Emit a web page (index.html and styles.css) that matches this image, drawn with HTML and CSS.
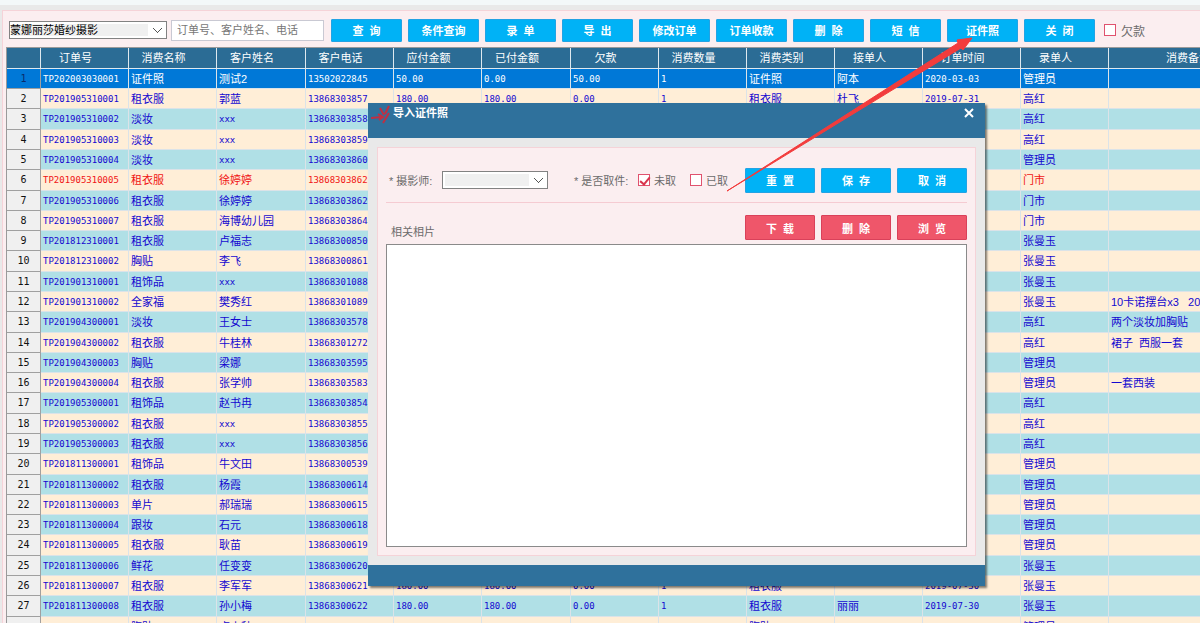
FILE: index.html
```
<!DOCTYPE html>
<html lang="zh-CN">
<head>
<meta charset="utf-8">
<title>导入证件照</title>
<link rel="stylesheet" href="styles.css">
</head>
<body>
<main class="panel">
  <form class="toolbar">
    <select class="combo shop" aria-label="门店"><option>蒙娜丽莎婚纱摄影</option></select>
    <input class="search" type="text" aria-label="搜索" placeholder="订单号、客户姓名、电话">
    <div class="actions">
      <button type="button" class="btn">查&nbsp; 询</button>
      <button type="button" class="btn">条件查询</button>
      <button type="button" class="btn">录&nbsp; 单</button>
      <button type="button" class="btn">导&nbsp; 出</button>
      <button type="button" class="btn">修改订单</button>
      <button type="button" class="btn">订单收款</button>
      <button type="button" class="btn">删&nbsp; 除</button>
      <button type="button" class="btn">短&nbsp; 信</button>
      <button type="button" class="btn">证件照</button>
      <button type="button" class="btn">关&nbsp; 闭</button>
    </div>
    <label class="check debt"><input type="checkbox">欠款</label>
  </form>
  <div class="grid-wrap">
    <table class="grid">
      <colgroup>
        <col class="c-no"><col class="c-std"><col class="c-std"><col class="c-wide"><col class="c-std"><col class="c-std"><col class="c-wide"><col class="c-std"><col class="c-std"><col class="c-std"><col class="c-std"><col class="c-date"><col class="c-std"><col class="c-note">
      </colgroup>
      <thead>
        <tr><th></th><th>订单号</th><th>消费名称</th><th>客户姓名</th><th>客户电话</th><th>应付金额</th><th>已付金额</th><th>欠款</th><th>消费数量</th><th>消费类别</th><th>接单人</th><th>订单时间</th><th>录单人</th><th>消费备注</th></tr>
      </thead>
      <tbody id="rows"></tbody>
    </table>
  </div>
</main>

<section class="dialog" role="dialog" aria-labelledby="dialog-title">
  <header class="dialog-head">
    <svg class="logo" viewBox="0 0 20 20" aria-hidden="true">
      <path d="M0 14 L11 13 M7 10 L12 13 L8 16 M9 4 L13 11 M18 2 L14 10 M18 9 L12 19" fill="none" stroke="#c02f42" stroke-width="2"/>
    </svg>
    <h1 id="dialog-title">导入证件照</h1>
    <button type="button" class="close" aria-label="关闭">
      <svg viewBox="0 0 12 12" aria-hidden="true"><path d="M2 2 L10 10 M10 2 L2 10" stroke="#fff" stroke-width="2"/></svg>
    </button>
  </header>
  <form class="dialog-body">
    <div class="form-row">
      <label class="field" for="photographer">* 摄影师:</label>
      <select class="combo photographer" id="photographer"><option></option></select>
      <fieldset class="pickup">
        <legend>* 是否取件:</legend>
        <label class="check"><input type="checkbox" checked>未取</label>
        <label class="check"><input type="checkbox">已取</label>
      </fieldset>
      <div class="buttons">
        <button type="button" class="btn">重&nbsp; 置</button>
        <button type="button" class="btn">保&nbsp; 存</button>
        <button type="button" class="btn">取&nbsp; 消</button>
      </div>
    </div>
    <div class="photo-row">
      <span class="caption">相关相片</span>
      <div class="buttons">
        <button type="button" class="btn red">下&nbsp; 载</button>
        <button type="button" class="btn red">删&nbsp; 除</button>
        <button type="button" class="btn red">浏&nbsp; 览</button>
      </div>
    </div>
    <div class="photos"></div>
  </form>
  <footer class="dialog-foot"></footer>
</section>

<svg class="arrow" viewBox="0 0 250 156" aria-hidden="true">
  <path d="M1 154 L232 6 L231 3 L246 1 L237 13 L235 11 Z" fill="#f23c3c" stroke="#f23c3c" stroke-width="1"/>
</svg>
<script src="app.js"></script>
</body>
</html>
```
FILE: styles.css
```
* { box-sizing: border-box; }
body {
  margin: 0;
  height: 100vh;
  overflow: hidden;
  padding: 10px 0 0 2px;
  background: linear-gradient(#f3f8f9 5px, #e9e9e9 5px);
  font-family: "Liberation Sans", "Noto Sans CJK SC", sans-serif;
  font-size: 11px;
  color: #6b6b6b;
}
button, input, select { font: inherit; }
.panel {
  height: 100%;
  display: flex;
  flex-direction: column;
  background: #fbeef0;
  border: 1px solid #f5d3d8;
  border-right: 0;
  border-bottom: 0;
  padding-left: 3px;
}
.toolbar {
  display: flex;
  align-items: center;
  height: 36px;
  padding: 2px 0 0 3px;
  flex: none;
}
.combo {
  appearance: none;
  height: 18px;
  padding: 0 18px 0 0;
  border: 1px solid #828282;
  border-radius: 0;
  line-height: 16px;
  color: #000;
  background:
    linear-gradient(#f0f0f0, #f0f0f0) 2px 2px / calc(100% - 20px) 12px no-repeat,
    linear-gradient(45deg, transparent 46%, #555 46%, #555 58%, transparent 58%) right 8px center / 5px 5px no-repeat,
    linear-gradient(-45deg, transparent 46%, #555 46%, #555 58%, transparent 58%) right 4px center / 5px 5px no-repeat,
    #fff;
}
.shop { width: 158px; }
.search {
  width: 153px;
  height: 21px;
  margin-left: 4px;
  padding: 0 5px;
  border: 1px solid #c9c9d3;
  background: #fff;
}
.search::placeholder { color: #777; }
.actions { display: flex; gap: 6px; margin-left: 7px; }
.btn {
  width: 71px;
  height: 23px;
  padding: 0;
  border: 1px solid #22a3e4;
  border-radius: 1px;
  background: #00b2f6;
  color: #fff;
  font-weight: bold;
  white-space: nowrap;
}
.check { display: flex; align-items: center; gap: 4px; }
.check input {
  appearance: none;
  width: 12px;
  height: 12px;
  margin: 0;
  border: 1px solid #e0526e;
  background: #fff;
}
.check input:checked::before {
  content: "";
  display: block;
  width: 4px;
  height: 8px;
  margin: 0 0 0 3px;
  border: solid #d8344c;
  border-width: 0 2px 2px 0;
  transform: rotate(40deg);
}
.debt { margin-left: 9px; gap: 5px; font-size: 12px; }

.grid-wrap {
  flex: 1;
  overflow: hidden;
  border: solid #9a9a9a;
  border-width: 1px 0 0 1px;
}
.grid {
  width: 1279px;
  table-layout: fixed;
  border-collapse: separate;
  border-spacing: 0;
}
.c-no { width: 34px; }
.c-std { width: 88px; }
.c-wide { width: 89px; }
.c-date { width: 98px; }
.c-note { width: 177px; }
.grid th {
  height: 21px;
  padding: 0 18px 0 0;
  background: #2b6c95;
  border: solid #dfe9ef;
  border-width: 0 1px 1px 0;
  color: #fff;
  font-weight: normal;
  line-height: 18px;
}
.grid td {
  height: 20px;
  padding: 0 0 0 2px;
  border: solid #dbe3e8;
  border-width: 0 1px 1px 0;
  line-height: 18px;
  white-space: pre;
  overflow: hidden;
  color: #1408d0;
}
.grid tbody tr:nth-child(7n+3) td,
.grid tbody tr:nth-child(7n+6) td { height: 21px; }
.grid tr:nth-child(even) td { background: #ffeed7; }
.grid tr:nth-child(odd) td { background: #b0e0e6; }
.grid .num { font-family: "DejaVu Sans Mono", monospace; font-size: 9px; }
.grid tbody tr td.no {
  padding: 0;
  background: #f0f0f0;
  border-color: #a0a0a0;
  color: #111;
  text-align: center;
  font-family: "DejaVu Sans Mono", monospace;
  font-size: 10px;
}
.grid tr.late td:not(.no) { color: #f01414; }
.grid tbody tr.current td { background: #0078d7; color: #fff; }
.grid tbody tr.current td.no { background: #0078d7; color: #0a2b6b; }

.dialog {
  position: absolute;
  left: 368px;
  top: 103px;
  width: 617px;
  background: #e9e9e9;
  box-shadow: 2px 2px 2px #00000080;
}
.dialog-head {
  display: flex;
  align-items: flex-start;
  height: 35px;
  padding: 1px 10px 0 3px;
  background: #2f719c;
}
.logo { width: 20px; height: 20px; }
.dialog h1 {
  flex: 1;
  margin: 0 0 0 2px;
  font-size: 11px;
  line-height: 18px;
  color: #fff;
}
.close {
  width: 12px;
  height: 18px;
  padding: 0;
  border: 0;
  background: none;
}
.close svg { width: 12px; height: 12px; display: block; }
.dialog-body {
  margin: 9px;
  padding: 20px 8px 8px;
  border: 1px solid #f5d3d8;
  background: #fbeef0;
}
.form-row {
  display: flex;
  align-items: center;
  height: 35px;
  padding: 0 0 10px 3px;
  border-bottom: 1px solid #f5cbd2;
}
.field { width: 53px; }
.photographer { width: 106px; }
.pickup {
  display: flex;
  align-items: center;
  gap: 14px;
  margin: 0 0 0 26px;
  padding: 0;
  border: 0;
}
.pickup legend { float: left; width: 50px; padding: 0; white-space: nowrap; }
.buttons { display: flex; gap: 6px; margin-left: auto; }
.dialog .btn { width: 70px; height: 25px; }
.dialog .red { background: #ef566a; border-color: #d9415a; }
.photo-row {
  display: flex;
  align-items: center;
  padding: 12px 0 4px 5px;
}
.caption { padding-top: 6px; }
.photos { height: 303px; border: 1px solid #8a8a8a; background: #fff; }
.dialog-foot { height: 21px; background: #2f719c; }
.arrow {
  position: absolute;
  left: 726px;
  top: 37px;
  width: 250px;
  height: 156px;
  pointer-events: none;
}
```
FILE: app.js
```
// Each order: number, item, customer, phone, due, paid, owed, count, category, receiver, date, clerk, note
const orders = [
  ["TP202003030001", "证件照", "测试2", "13502022845", "50.00", "0.00", "50.00", "1", "证件照", "阿本", "2020-03-03", "管理员", ""],
  ["TP201905310001", "租衣服", "郭蓝", "13868303857", "180.00", "180.00", "0.00", "1", "租衣服", "杜飞", "2019-07-31", "高红", ""],
  ["TP201905310002", "淡妆", "xxx", "13868303858", "高红"],
  ["TP201905310003", "淡妆", "xxx", "13868303859", "高红"],
  ["TP201905310004", "淡妆", "xxx", "13868303860", "管理员"],
  ["TP201905310005", "租衣服", "徐婷婷", "13868303862", "门市"],
  ["TP201905310006", "租衣服", "徐婷婷", "13868303862", "门市"],
  ["TP201905310007", "租衣服", "海博幼儿园", "13868303864", "门市"],
  ["TP201812310001", "租衣服", "卢福志", "13868300850", "张曼玉"],
  ["TP201812310002", "胸贴", "李飞", "13868300861", "张曼玉"],
  ["TP201901310001", "租饰品", "xxx", "13868301088", "张曼玉"],
  ["TP201901310002", "全家福", "樊秀红", "13868301089", "张曼玉", "10卡诺摆台x3   20寸"],
  ["TP201904300001", "淡妆", "王女士", "13868303578", "高红", "两个淡妆加胸贴"],
  ["TP201904300002", "租衣服", "牛桂林", "13868301272", "高红", "裙子  西服一套"],
  ["TP201904300003", "胸贴", "梁娜", "13868303595", "管理员"],
  ["TP201904300004", "租衣服", "张学帅", "13868303583", "管理员", "一套西装"],
  ["TP201905300001", "租饰品", "赵书冉", "13868303854", "高红"],
  ["TP201905300002", "租衣服", "xxx", "13868303855", "高红"],
  ["TP201905300003", "租衣服", "xxx", "13868303856", "高红"],
  ["TP201811300001", "租饰品", "牛文田", "13868300539", "管理员"],
  ["TP201811300002", "租衣服", "杨霞", "13868300614", "管理员"],
  ["TP201811300003", "单片", "郝瑞瑞", "13868300615", "管理员"],
  ["TP201811300004", "跟妆", "石元", "13868300618", "管理员"],
  ["TP201811300005", "租衣服", "耿苗", "13868300619", "管理员"],
  ["TP201811300006", "鲜花", "任变变", "13868300620", "张曼玉"],
  ["TP201811300007", "租衣服", "李军军", "13868300621", "180.00", "180.00", "0.00", "1", "租衣服", "", "2019-07-30", "张曼玉", ""],
  ["TP201811300008", "租衣服", "孙小梅", "13868300622", "180.00", "180.00", "0.00", "1", "租衣服", "丽丽", "2019-07-30", "张曼玉", ""],
  ["", "胸贴", "卢小秋", "", "", "", "", "", "胸贴", "", "", "管理员", ""]
];

const body = document.getElementById("rows");
orders.forEach((order, i) => {
  // Short records carry only the clerk and an optional note after the phone.
  const cells = order.length > 6
    ? order
    : [...order.slice(0, 4), "", "", "", "", "", "", "", order[4], order[5] || ""];
  const tr = body.insertRow();
  if (i === 0) tr.className = "current";
  if (i === 5) tr.className = "late";
  const no = tr.insertCell();
  no.className = "no";
  no.textContent = order[0] ? i + 1 : "";
  for (const text of cells) {
    const td = tr.insertCell();
    td.textContent = text;
    if (/^[\x20-\x7e]+$/.test(text)) td.className = "num";
  }
});
```
